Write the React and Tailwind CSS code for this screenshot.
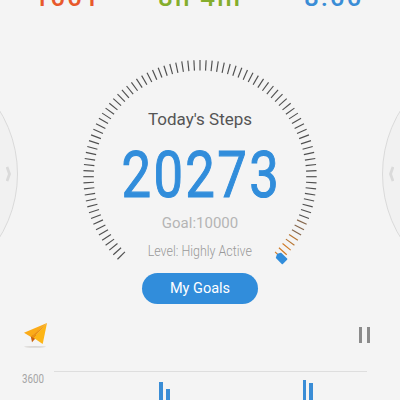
const stats = [
  { value: "1001", className: "left-[34px] text-[#e8592b] tracking-[1.8px]" },
  { value: "8h 4m", className: "left-[158px] text-[#84ad2c] tracking-[2.2px]" },
  { value: "8.00", className: "left-[304px] text-[#3a8dd6] tracking-[2px]" },
];

const bars = [
  { left: 159, width: 4, height: 18 },
  { left: 166, width: 4, height: 11 },
  { left: 303, width: 3, height: 20 },
  { left: 309, width: 4, height: 17 },
];

function tickColor(angle) {
  if (angle > 128) return "#d07a25";
  if (angle > 122) return "#b87632";
  if (angle > 113) return "#85664b";
  return "#505050";
}

function Dial() {
  const ticks = [];
  for (let angle = -135; angle <= 135; angle += 3) {
    ticks.push(angle);
  }

  return (
    <svg className="absolute inset-0" width="240" height="240" viewBox="0 0 240 240">
      {ticks.map((angle) => (
        <line
          key={angle}
          x1="120"
          y1="3"
          x2="120"
          y2="13.5"
          stroke={tickColor(angle)}
          strokeWidth="1.15"
          transform={`rotate(${angle} 120 119.7)`}
        />
      ))}
      <path
        d="M-3 -4 L0 -5.4 L3 -4 V4 H-3 Z"
        fill="#318ddb"
        stroke="#318ddb"
        strokeWidth="1.6"
        strokeLinejoin="round"
        transform="translate(201.6 201.4) rotate(-45)"
      />
    </svg>
  );
}

function SideCircle({ side }) {
  const place = side === "left" ? "-left-[226px]" : "-right-[226px]";
  const flip = side === "left" ? "right-[5px]" : "left-[5px] -scale-x-100";
  return (
    <div className={`absolute top-[52px] size-[244px] rounded-full border border-[#dadada] bg-[#f1f1f1] ${place}`}>
      <svg className={`absolute top-[113px] ${flip}`} width="6" height="16" viewBox="0 0 6 16">
        <path d="M1 1 L3.5 8 L1 15" fill="none" stroke="#dadada" strokeWidth="2.8" strokeLinejoin="round" />
      </svg>
    </div>
  );
}

function Plane() {
  return (
    <svg width="26" height="28" viewBox="0 0 26 28">
      <ellipse cx="12" cy="24.8" rx="11" ry="0.9" fill="#d9d6d3" />
      <path d="M7.5 13 L9 20.3 L11.5 17.5 L14 13 Z" fill="#c9610f" />
      <path d="M1 10.7 L24 1 L8 15 Z" fill="#fbab18" />
      <path d="M24 1 L19.7 22 L10.5 15.8 Z" fill="#fdb515" />
      <path d="M24 1 L8 14.5 L10.5 16 Z" fill="#ec9312" />
    </svg>
  );
}

export default function App() {
  return (
    <div className="relative flex h-[400px] w-[400px] flex-col overflow-hidden bg-[#f4f4f4] font-['Roboto',sans-serif]">
      <SideCircle side="left" />
      <SideCircle side="right" />

      <header className="relative h-[57px] shrink-0">
        {stats.map((s) => (
          <span
            key={s.value}
            className={`absolute -top-[21px] text-[26px] leading-[36px] font-medium whitespace-pre ${s.className}`}
          >
            {s.value}
          </span>
        ))}
      </header>

      <main className="relative mx-auto flex h-[248px] w-[240px] shrink-0 flex-col items-center whitespace-nowrap">
        <Dial />
        <h1 className="mt-[51px] text-[17px] leading-[22px] text-[#555]">Today's Steps</h1>
        <p className="mt-[12px] h-[66px] scale-x-[.81] pl-[3px] text-[65px] leading-[66px] tracking-[2.9px] text-[#318ddb] [-webkit-text-stroke:1.1px_#318ddb]">
          20273
        </p>
        <p className="mt-[5px] text-[15px] leading-[20px] text-[#b5b5b5]">Goal:10000</p>
        <p className="mt-[8px] scale-x-[.83] text-[15px] leading-[20px] font-light text-[#999]">Level: Highly Active</p>
        <button className="mt-[12px] h-[31px] w-[116px] shrink-0 rounded-full bg-[#318ddb] text-[14.5px] leading-[32px] text-white">
          My Goals
        </button>
      </main>

      <div className="mt-[17px] flex h-[28px] shrink-0 items-start justify-between pr-[30px] pl-[23px]">
        <Plane />
        <div className="mt-[5px] flex gap-[5px]" aria-label="Pause">
          <i className="h-4 w-[3px] bg-[#8b8b8b]" />
          <i className="h-4 w-[3px] bg-[#8b8b8b]" />
        </div>
      </div>

      <section className="relative mt-[21px] h-[29px] shrink-0">
        <div className="mr-[33px] ml-[54px] h-px bg-[#dedede]" />
        <span className="absolute top-0 left-[22px] origin-left scale-x-[.75] text-[13px] leading-[16px] text-[#a5a5a5]">
          3600
        </span>
        {bars.map((b) => (
          <i key={b.left} className="absolute bottom-0 bg-[#3a8dd6]" style={b} />
        ))}
      </section>
    </div>
  );
}
